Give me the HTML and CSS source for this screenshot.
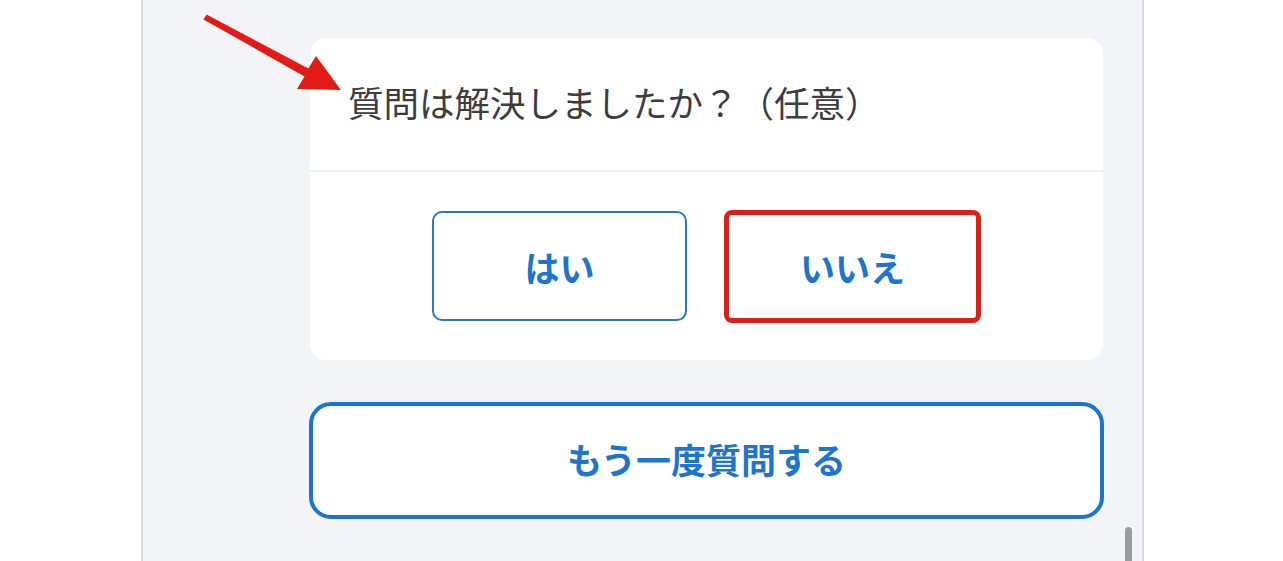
FILE: index.html
```html
<!DOCTYPE html>
<html lang="ja">
<head>
<meta charset="utf-8">
<title>質問は解決しましたか？</title>
<link rel="stylesheet" href="styles.css">
</head>
<body>
<div class="page">
  <div class="panel">
    <div class="card">
      <div class="card-head">質問は解決しましたか？（任意）</div>
      <div class="card-actions">
        <button class="choice">はい</button>
        <button class="choice choice-marked">いいえ</button>
      </div>
    </div>
    <button class="retry">もう一度質問する</button>
    <div class="scroll-thumb"></div>
  </div>
</div>
<svg class="annot" width="1283" height="561" viewBox="0 0 1283 561">
  <polygon points="206.5,14.5 308.4,68.5 316,56 341,90 297,89 304.6,76.5 203.5,19.5" fill="#e31b17"/>
</svg>
</body>
</html>
```
FILE: styles.css
```css
html, body {
  margin: 0;
  padding: 0;
  background: #ffffff;
  height: 561px;
  overflow: hidden;
}

.page {
  display: flex;
  height: 561px;
  padding-left: 141px;
}

.panel {
  position: relative;
  width: 1003px;
  height: 561px;
  box-sizing: border-box;
  background: #f3f4f8;
  border-left: 2px solid #d5d9df;
  border-right: 2px solid #d5d9df;
  padding: 38px 39px 0 167px;
  display: flex;
  flex-direction: column;
  font-family: "Noto Sans CJK JP", "Noto Sans", sans-serif;
}

.card {
  background: #ffffff;
  border-radius: 16px;
  display: flex;
  flex-direction: column;
  flex-shrink: 0;
}

.card-head {
  height: 134px;
  display: flex;
  align-items: center;
  padding-left: 38px;
  padding-bottom: 6px;
  font-size: 35.5px;
  color: #3d3d3d;
  border-bottom: 2px solid #eef0f3;
  box-sizing: border-box;
}

.card-actions {
  display: flex;
  justify-content: center;
  align-items: center;
  gap: 37px;
  height: 188px;
}

.choice {
  width: 255px;
  height: 110px;
  box-sizing: border-box;
  background: #ffffff;
  border: 2px solid #2878c8;
  border-radius: 10px;
  font-family: "Noto Sans CJK JP", "Noto Sans", sans-serif;
  font-weight: 700;
  font-size: 35px;
  color: #1f74cc;
  display: flex;
  align-items: center;
  justify-content: center;
  padding: 0;
}

.choice-marked {
  width: 257px;
  height: 113px;
  border: 5px solid #da2119;
  border-radius: 8px;
  padding-top: 1px;
}

.retry {
  flex-shrink: 0;
  margin-top: 42px;
  width: 795px;
  margin-left: -1px;
  height: 117px;
  box-sizing: border-box;
  background: #ffffff;
  border: 4px solid #1c74d2;
  border-radius: 22px;
  font-family: "Noto Sans CJK JP", "Noto Sans", sans-serif;
  font-weight: 700;
  font-size: 35px;
  color: #1f74cc;
  display: flex;
  align-items: center;
  justify-content: center;
  padding: 0 0 4px 0;
}

.scroll-thumb {
  position: absolute;
  left: 982px;
  top: 527px;
  width: 7px;
  height: 50px;
  border-radius: 4px;
  background: #9c9ca0;
}

.annot {
  position: absolute;
  left: 0;
  top: 0;
  pointer-events: none;
}
```
